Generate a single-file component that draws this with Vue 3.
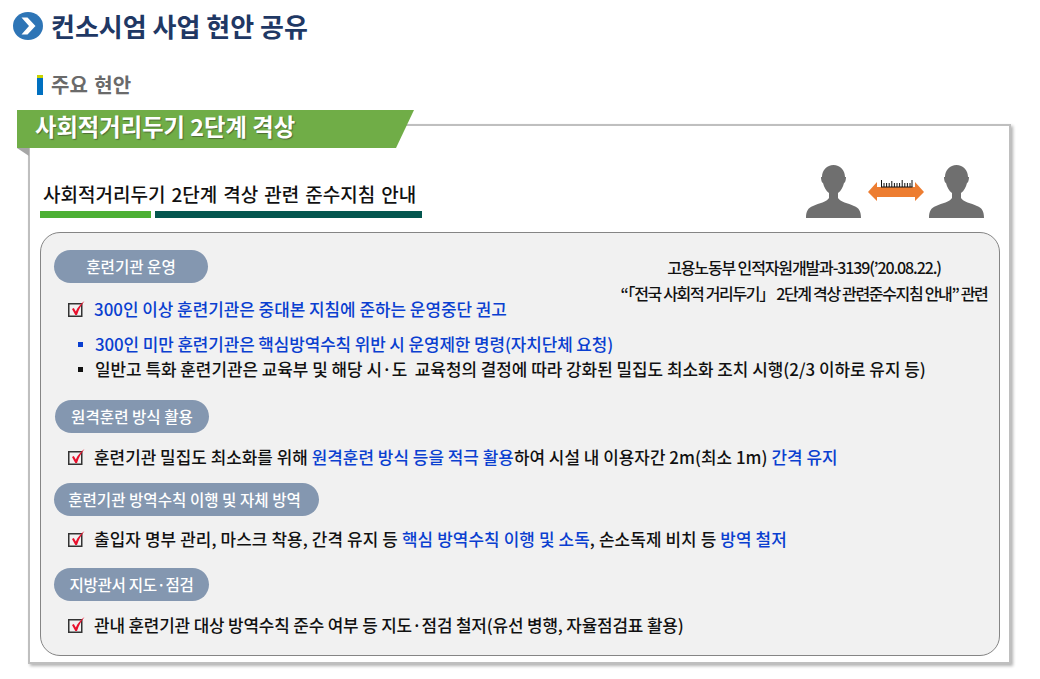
<script setup>
const personPath = 'M0 53c0-7 2-10 7-12 6-3 14-4 16-8v-5c-3-2-5-6-6-10-1 0-2-3-2-6h1C16 5 21 0 27.500 0S39 5 39 12h1c0 3-1 6-2 6-1 4-3 8-6 10v5c2 4 10 5 16 8 5 2 7 5 7 12z'
const checkBox = 'M0.750 2.750h13v12.500h-13z'
const checkMark = 'M4 8l1.800-1 2 3.500C9.500 6.500 12.500 3 16.500 0c-3 3.500-5.800 8.500-7.500 14H7.300z'
</script>

<template>
  <div class="page">
    <header class="title">
      <svg class="title-icon" width="30" height="28" viewBox="0 0 30 28">
        <ellipse cx="15" cy="14" rx="15" ry="14" fill="#2e75b6" />
        <path d="M8.500 5.500h6l8 8.500-8 8.500h-6l7.500-8.500z" fill="#fff" />
      </svg>
      <h1>컨소시엄 사업 현안 공유</h1>
    </header>

    <div class="section-head">
      <span class="mark"></span>
      <h2>주요 현안</h2>
    </div>

    <div class="card-wrap">
      <div class="banner-row">
        <div class="banner">사회적거리두기 2단계 격상</div>
        <svg class="fold" width="12" height="8" viewBox="0 0 12 8"><path d="M0 0h12v8z" fill="#a6a6a6" /></svg>
      </div>

      <div class="card">
        <div class="card-head">
          <div>
            <h3>사회적거리두기 2단계 격상 관련 준수지침 안내</h3>
            <div class="bars"><span class="bar-a"></span><span class="bar-b"></span></div>
          </div>
          <svg class="people" width="180" height="56" viewBox="0 0 180 56">
            <path :d="personPath" fill="#6f6f6f" />
            <path :d="personPath" fill="#6f6f6f" transform="translate(123 0)" />
            <path d="M62 27l9-10v5h38v-5l9 10-9 9v-4H71v4z" fill="#ed7d31" />
            <path d="M75.500 22v-7M78 22v-4M80.600 22v-4M83.200 22v-4M85.800 22v-6M88.400 22v-4M91 22v-4M93.600 22v-4M96.200 22v-7M98.800 22v-4M101.400 22v-4M104 22v-4M106 22v-7M75 22h31.500" stroke="#111" stroke-width="1" fill="none" />
          </svg>
        </div>

        <div class="panel">
          <div class="note">
            <p class="note-1">고용노동부 인적자원개발과-3139(’20.08.22.)</p>
            <p class="note-2">“「전국 사회적 거리두기」 2단계 격상 관련준수지침 안내” 관련</p>
          </div>

          <div class="pill pill-1">훈련기관 운영</div>
          <div class="row row-1">
            <svg class="check" width="17" height="16" viewBox="0 0 17 16"><path :d="checkBox" fill="none" stroke="#333" stroke-width="1.500" /><path :d="checkMark" fill="#e8112d" /></svg>
            <span class="blue">300인 이상 훈련기관은 중대본 지침에 준하는 운영중단 권고</span>
          </div>
          <div class="bullet blue bullet-1"><i></i>300인 미만 훈련기관은 핵심방역수칙 위반 시 운영제한 명령(자치단체 요청)</div>
          <div class="bullet bullet-2"><i></i>일반고 특화 훈련기관은 교육부 및 해당 시·도&nbsp; 교육청의 결정에 따라 강화된 밀집도 최소화 조치 시행(2/3 이하로 유지 등)</div>

          <div class="pill pill-2">원격훈련 방식 활용</div>
          <div class="row row-2">
            <svg class="check" width="17" height="16" viewBox="0 0 17 16"><path :d="checkBox" fill="none" stroke="#333" stroke-width="1.500" /><path :d="checkMark" fill="#e8112d" /></svg>
            <span>훈련기관 밀집도 최소화를 위해 <b class="blue">원격훈련 방식 등을 적극 활용</b>하여 시설 내 이용자간 2m(최소 1m) <b class="blue">간격 유지</b></span>
          </div>

          <div class="pill pill-3">훈련기관 방역수칙 이행 및 자체 방역</div>
          <div class="row row-3">
            <svg class="check" width="17" height="16" viewBox="0 0 17 16"><path :d="checkBox" fill="none" stroke="#333" stroke-width="1.500" /><path :d="checkMark" fill="#e8112d" /></svg>
            <span>출입자 명부 관리, 마스크 착용, 간격 유지 등 <b class="blue">핵심 방역수칙 이행 및 소독</b>, 손소독제 비치 등 <b class="blue">방역 철저</b></span>
          </div>

          <div class="pill pill-4">지방관서 지도·점검</div>
          <div class="row row-4">
            <svg class="check" width="17" height="16" viewBox="0 0 17 16"><path :d="checkBox" fill="none" stroke="#333" stroke-width="1.500" /><path :d="checkMark" fill="#e8112d" /></svg>
            <span>관내 훈련기관 대상 방역수칙 준수 여부 등 지도·점검 철저(유선 병행, 자율점검표 활용)</span>
          </div>
        </div>
      </div>
    </div>
  </div>
</template>

<style>
html, body { margin: 0; background: #fff; }
</style>

<style scoped>
.page {
  width: 1040px;
  height: 679px;
  overflow: hidden;
  box-sizing: border-box;
  padding-top: 12px;
  font-family: "Noto Sans CJK KR", "Noto Sans", sans-serif;
  color: #111;
  background: #fff;
}
.title { display: flex; align-items: flex-start; gap: 8px; height: 30px; padding-left: 13px; }
.title-icon { flex: none; }
h1 { margin: -1px 0 0; font-size: 26px; line-height: 30px; font-weight: 700; color: #1f3864; }
.section-head { display: flex; align-items: center; gap: 8px; margin: 31px 0 0 37px; height: 24px; }
.mark { width: 6px; height: 20px; background: linear-gradient(#c8d400 0 3px, #0070c0 3px); }
h2 { margin: 0; font-size: 20px; line-height: 24px; font-weight: 700; color: #6a6a6a; word-spacing: 2px; }
.card-wrap { margin: 13px 0 0 17px; width: 995px; position: relative; }
.banner-row { position: relative; z-index: 2; height: 38px; }
.banner {
  width: 397px; height: 38px; box-sizing: border-box; padding-left: 18px;
  clip-path: polygon(0 0, 100% 0, 379px 100%, 0 100%);
  background: #70ad47; color: #fff; font-size: 23.300px; line-height: 33px; font-weight: 700;
  text-shadow: 1px 1px 1px #4d6b35; white-space: nowrap;
}
.fold { position: absolute; left: 0; top: 38px; }
.card {
  margin: -24px 0 0 11px;
  width: 983px; height: 540px; box-sizing: border-box;
  border: 2px solid #bfbfbf; background: #fff;
  box-shadow: 2px 2px 3px rgba(0,0,0,.3);
  padding: 0 10px;
}
.card-head { display: flex; justify-content: space-between; height: 106px; box-sizing: border-box; padding: 54px 0 0; position: relative; }
h3 { margin: 0 0 0 3px; font-size: 19px; line-height: 28px; font-weight: 500; color: #111; white-space: nowrap; word-spacing: 1.800px; }
.bars { display: flex; gap: 4px; margin-top: 3px; }
.bar-a { width: 111px; height: 7px; background: #4cb034; }
.bar-b { width: 267px; height: 7px; background: #04564f; }
.people { position: absolute; right: 13px; top: 39px; }
.panel {
  position: relative; width: 960px; height: 424px; box-sizing: border-box;
  border: 1px solid #858585; border-radius: 20px; background: #f1f1f1;
  padding: 17px 13px 0;
}
.note {
  position: absolute; right: 5px; top: 21px; width: 380px; text-align: center;
  font-size: 16px; line-height: 26px; font-weight: 500; color: #111; letter-spacing: -1.300px;
}
.note p { margin: 0; white-space: nowrap; display: flex; justify-content: center; }
.note-1 { letter-spacing: -1.130px; }
.note-2 { letter-spacing: -1.330px; }
.pill {
  height: 33px; box-sizing: border-box; border-radius: 17px; background: #8497b0; color: #fff;
  font-size: 15.600px; line-height: 32px; font-weight: 500; text-align: center; white-space: nowrap;
}
.pill-1 { width: 154px; }
.pill-2 { width: 154px; margin-left: 1px; }
.pill-3 { width: 265px; padding-right: 4px; }
.pill-4 { width: 155px; letter-spacing: -0.300px; }
.row { display: flex; align-items: center; gap: 9px; font-size: 16.900px; line-height: 24px; font-weight: 500; white-space: nowrap; padding-left: 14px; height: 24px; }
.row b { font-weight: inherit; }
.blue { color: #0a3fd0; }
.bullet { font-size: 16.900px; line-height: 24px; font-weight: 500; white-space: nowrap; padding-left: 24px; display: flex; align-items: center; gap: 12px; height: 24px; }
.bullet i { width: 5px; height: 5px; background: currentColor; flex: none; }
.row-1 { margin-top: 14px; }
.bullet-1 { margin-top: 11px; letter-spacing: -0.090px; }
.bullet-2 { margin-top: 1px; }
.pill-2 { margin-top: 19px; }
.row-2 { margin-top: 12px; letter-spacing: 0.030px; }
.pill-3 { margin-top: 14px; }
.row-3 { margin-top: 11px; letter-spacing: 0.120px; }
.pill-4 { margin-top: 17px; }
.row-4 { margin-top: 12px; letter-spacing: -0.150px; }
</style>
